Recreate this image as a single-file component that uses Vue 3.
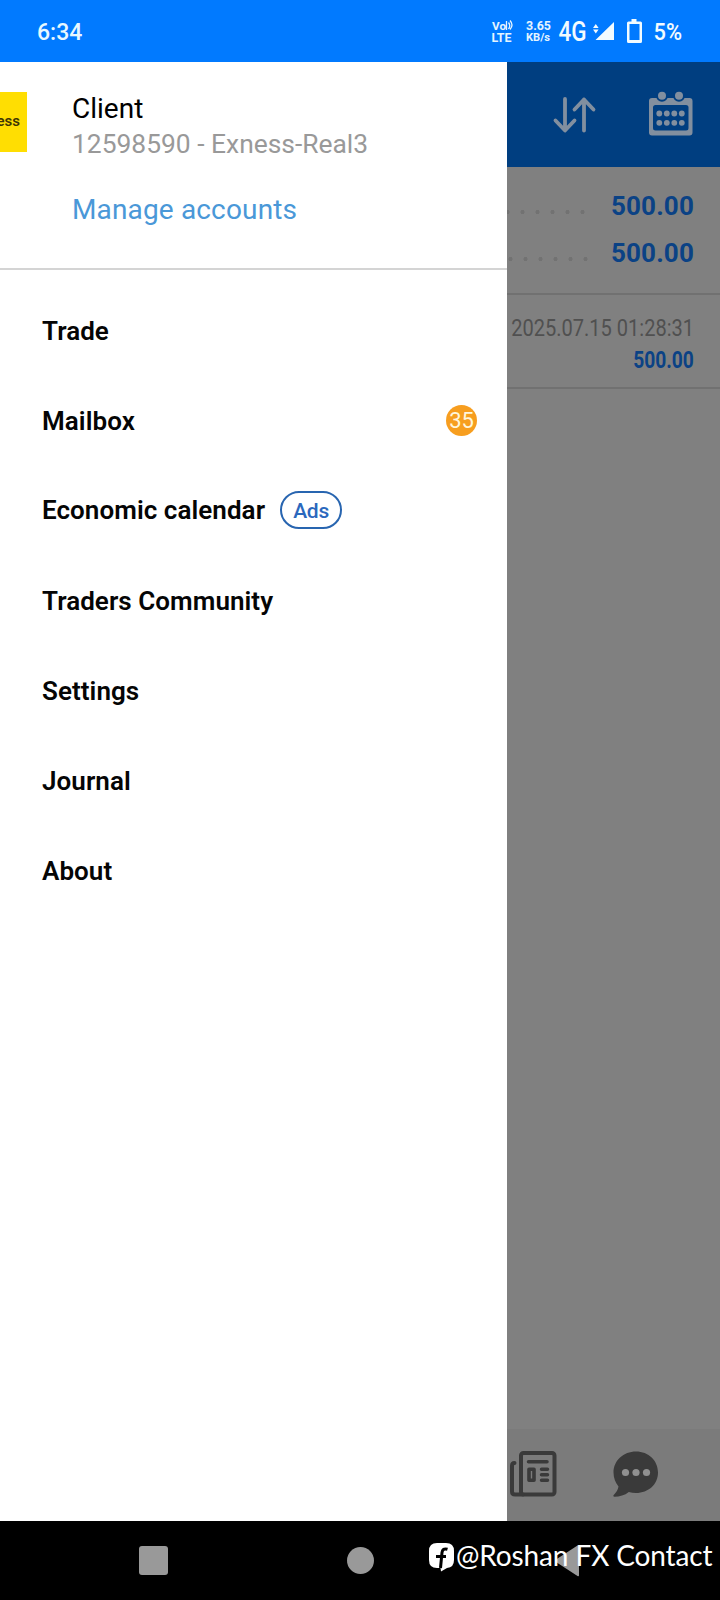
<template>
  <div class="screen">
    <header class="status-bar">
      <span class="clock">6:34</span>
      <svg class="status-icons" width="230" height="62" viewBox="490 0 230 62">
        <g fill="#e4f4ff" font-weight="700">
          <text x="492" y="29.500" font-size="11" textLength="14" lengthAdjust="spacingAndGlyphs">Vo</text>
          <text x="491.500" y="41.500" font-size="12" textLength="20" lengthAdjust="spacingAndGlyphs">LTE</text>
          <text x="526" y="30" font-size="12.500" textLength="25" lengthAdjust="spacingAndGlyphs">3.65</text>
          <text x="526" y="41" font-size="10.500" textLength="24" lengthAdjust="spacingAndGlyphs">KB/s</text>
        </g>
        <path d="M506.500 21v9M508.500 22.500q2.500 3.200 0 6.500M510 20.500q4 4.500 0 9" fill="none" stroke="#e4f4ff" stroke-width="1.300" />
        <g fill="#f2fbff">
          <text x="558.500" y="40.500" font-size="27" font-weight="500" textLength="28" lengthAdjust="spacingAndGlyphs">4G</text>
          <path d="M614 22v18h-18.500zM593 28l2.800-4 2.800 4zM593 29.500l2.800 4 2.800-4z" />
          <path fill-rule="evenodd" d="M631.500 19h5v2.500h4a1.500 1.500 0 0 1 1.500 1.500v18.500a1.500 1.500 0 0 1-1.500 1.500h-12a1.500 1.500 0 0 1-1.500-1.500v-18.500a1.500 1.500 0 0 1 1.500-1.500h3zM629.500 24v16h10v-16z" />
          <text x="653.500" y="40" font-size="23" font-weight="500" textLength="28.500" lengthAdjust="spacingAndGlyphs">5%</text>
        </g>
      </svg>
    </header>

    <div class="body">
      <aside class="drawer">
        <section class="account">
          <div class="broker-logo">ess</div>
          <div class="account-info">
            <div class="account-name">Client</div>
            <div class="account-server">12598590 - Exness-Real3</div>
            <a class="manage">Manage accounts</a>
          </div>
        </section>
        <nav class="menu">
          <div v-for="item in items" :key="item.label" class="menu-item">
            <span class="menu-label" :class="{ 'with-ads': item.ads }">{{ item.label }}</span>
            <span v-if="item.ads" class="ads">Ads</span>
            <span v-if="item.count" class="count">{{ item.count }}</span>
          </div>
        </nav>
      </aside>

      <main class="page">
        <div class="app-bar">
          <svg width="213" height="105" viewBox="507 62 213 105">
            <g fill="none" stroke="#828f9f" stroke-width="3.800" stroke-linecap="round" stroke-linejoin="round">
              <path d="M565 99v31M555.500 120.500L565 130.500l9.500-10" />
              <path d="M584 130.500V99.500M574.500 109.500L584 99.500l9.500 10" />
            </g>
            <g fill="#828f9f">
              <path fill-rule="evenodd" d="M652 98h37.500a3 3 0 0 1 3 3V132.500a3 3 0 0 1-3 3h-37.500a3 3 0 0 1-3-3v-31.500a3 3 0 0 1 3-3zM655.500 105a2.500 2.500 0 0 0-2.500 2.500v20.500a2.500 2.500 0 0 0 2.500 2.500h30.500a2.500 2.500 0 0 0 2.500-2.500v-20.500a2.500 2.500 0 0 0-2.500-2.500z" />
              <g stroke="#003e80" stroke-width="2">
                <circle cx="662" cy="95.800" r="5" />
                <circle cx="679" cy="95.800" r="5" />
              </g>
              <template v-for="y in [113.5, 122.8]" :key="y">
                <circle v-for="x in [659.3, 666.8, 674.3, 681.8]" :key="x" :cx="x" :cy="y" r="2.900" />
              </template>
            </g>
          </svg>
        </div>

        <div class="summary">
          <div class="summary-row"><span class="dots" /><b>500.00</b></div>
          <div class="summary-row"><span class="dots shifted" /><b>500.00</b></div>
        </div>
        <div class="deal">
          <div class="deal-time">2025.07.15 01:28:31</div>
          <div class="deal-sum">500.00</div>
        </div>

        <div class="tab-bar">
          <svg width="213" height="92" viewBox="507 1429 213 92">
            <g fill="none" stroke="#3a3a3a" stroke-width="4" stroke-linecap="round" stroke-linejoin="round">
              <rect x="521" y="1453" width="33.500" height="41.500" rx="2.500" />
              <path d="M514.500 1463q-2.500 0-2.500 3v25.500q0 3 3 3h8" />
              <path stroke-width="3.500" d="M528.500 1461.700h18.500M541.500 1469.300h6M541.500 1474.800h6M541.500 1480.300h6" />
              <rect x="529" y="1469.300" width="5" height="11" stroke-width="3.600" />
            </g>
            <path fill="#3a3a3a" d="M636 1451.500c12.500 0 22 9 22 21 0 11.800-9.500 20.500-22 20.500-2.500 0-5-.4-7.200-1-4 3.300-9.300 4.700-14.300 4.700-1.200 0-1.500-.9-.8-1.700 2.500-2.500 4.400-5.500 4.800-8.500-3-3.500-5-8.500-5-14 0-12 10-21 22.500-21z" />
            <g fill="#909090">
              <circle cx="625.500" cy="1472.500" r="3.600" />
              <circle cx="636" cy="1472.500" r="3.600" />
              <circle cx="646.500" cy="1472.500" r="3.600" />
            </g>
          </svg>
        </div>
      </main>
    </div>

    <footer class="nav-bar">
      <svg width="720" height="79" viewBox="0 1521 720 79">
        <g fill="#999">
          <rect x="139" y="1546" width="29" height="29" rx="3" />
          <circle cx="360.500" cy="1560.500" r="13.500" />
          <path d="M577.500 1545.500q1.500-.8 1.500.8v28.900q0 1.600-1.500.8l-21.500-14q-1.700-1.300 0-2.500z" />
        </g>
      </svg>
      <div class="credit">
        <svg width="25" height="29" viewBox="0 0 25 29">
          <path fill="#fff" d="M8 0h9q8 0 8 8v9q0 7.500-7 8l-6 3.500-.5-3.500H8q-8 0-8-8V8q0-8 8-8z" />
          <path fill="none" stroke="#000" stroke-width="3" d="M18.500 6.300q-5-1.500-5.500 3.200L11.500 25M7 13.500h10" />
        </svg>
        <span class="credit-text">@Roshan FX Contact</span>
      </div>
    </footer>
  </div>
</template>

<script setup>
const items = [
  { label: 'Trade' },
  { label: 'Mailbox', count: 35 },
  { label: 'Economic calendar', ads: true },
  { label: 'Traders Community' },
  { label: 'Settings' },
  { label: 'Journal' },
  { label: 'About' },
];
</script>

<style>
body {
  margin: 0;
  background: #000;
}
</style>

<style scoped>
.screen {
  width: 720px;
  height: 1600px;
  display: flex;
  flex-direction: column;
  overflow: hidden;
  font-family: Roboto, "Liberation Sans", sans-serif;
}

svg {
  display: block;
}

.status-bar {
  height: 62px;
  display: flex;
  align-items: center;
  justify-content: space-between;
  padding-left: 37px;
  background: #017aff;
}

.clock {
  color: #e8f8ff;
  font-size: 23px;
  font-weight: 500;
  line-height: 28px;
  padding-top: 3px;
}

.body {
  height: 1459px;
  display: flex;
}

/* 侧边抽屉 */
.drawer {
  width: 507px;
  background: #fff;
}

.account {
  height: 206px;
  display: flex;
  border-bottom: 2px solid #d4d4d4;
}

.broker-logo {
  width: 27px;
  height: 60px;
  margin-top: 30px;
  padding: 0 7px 2px 0;
  box-sizing: border-box;
  display: flex;
  align-items: center;
  justify-content: flex-end;
  overflow: hidden;
  background: #ffde02;
  color: #3d3604;
  font-size: 15px;
  font-weight: 600;
}

.account-info {
  display: flex;
  flex-direction: column;
  padding: 29px 0 0 45px;
  white-space: nowrap;
}

.account-name {
  height: 35px;
  font-size: 28px;
  line-height: 36px;
  color: #000;
}

.account-server {
  font-size: 26.4px;
  line-height: 36px;
  color: #999;
}

.manage {
  margin-top: 30px;
  font-size: 28px;
  line-height: 36px;
  letter-spacing: 0.15px;
  color: #4a98d8;
}

.menu {
  padding-top: 15px;
}

.menu-item {
  height: 90px;
  display: flex;
  align-items: center;
  padding: 0 30px 0 42px;
}

.menu-label {
  padding-top: 3px;
  font-size: 26px;
  line-height: 31px;
  font-weight: 600;
  letter-spacing: 0.06px;
  color: #050505;
}

.menu-label.with-ads {
  padding-top: 1px;
}

.ads {
  width: 62px;
  height: 38px;
  margin-left: 15px;
  padding-top: 1px;
  box-sizing: border-box;
  border: 2px solid #2865b0;
  border-radius: 19px;
  display: flex;
  align-items: center;
  justify-content: center;
  color: #2b68bd;
  font-size: 21px;
  font-weight: 500;
  letter-spacing: -0.3px;
}

.count {
  width: 31px;
  height: 31px;
  padding-top: 1px;
  box-sizing: border-box;
  margin-left: auto;
  border-radius: 50%;
  display: flex;
  align-items: center;
  justify-content: center;
  background: #f79e1f;
  color: #fff6dd;
  font-size: 22px;
}

/* 遮罩后的页面 */
.page {
  width: 213px;
  display: flex;
  flex-direction: column;
  background: #808080;
}

.app-bar {
  height: 105px;
  background: #003e80;
}

.summary {
  height: 128px;
  box-sizing: border-box;
  padding: 15px 26px 0 0;
  border-bottom: 2px solid #717171;
}

.summary-row {
  height: 47px;
  display: flex;
  align-items: center;
  justify-content: space-between;
  color: #0b4285;
  font-size: 26px;
}

.summary-row b {
  letter-spacing: 0.15px;
}

.dots {
  width: 82px;
  height: 6px;
  margin-top: 12px;
  background: radial-gradient(circle, #727272 1.8px, transparent 2.3px) -7px 0 / 15px 6px;
}

.dots.shifted {
  background-position: -4px 0;
}

.deal {
  height: 94px;
  box-sizing: border-box;
  padding: 17px 26px 0 0;
  border-bottom: 2px solid #717171;
  display: flex;
  flex-direction: column;
  align-items: flex-end;
  white-space: nowrap;
}

.deal-time,
.deal-sum {
  font-size: 24px;
  line-height: 32px;
  transform: scaleX(0.835);
  transform-origin: right;
}

.deal-time {
  color: #505050;
}

.deal-sum {
  color: #0b4285;
  font-weight: 700;
  transform: scaleX(0.8);
}

.tab-bar {
  height: 92px;
  margin-top: auto;
  background: #7b7b7b;
}

.nav-bar {
  position: relative;
  height: 79px;
  background: #000;
}

.credit {
  position: absolute;
  left: 429px;
  top: 16px;
  display: flex;
  align-items: center;
  gap: 2px;
  color: #fff;
  white-space: nowrap;
}

.credit svg {
  margin-top: 5px;
}

.credit-text {
  font-family: Lato, "Noto Sans", sans-serif;
  font-size: 28px;
  line-height: 36px;
  letter-spacing: -0.12px;
}
</style>
